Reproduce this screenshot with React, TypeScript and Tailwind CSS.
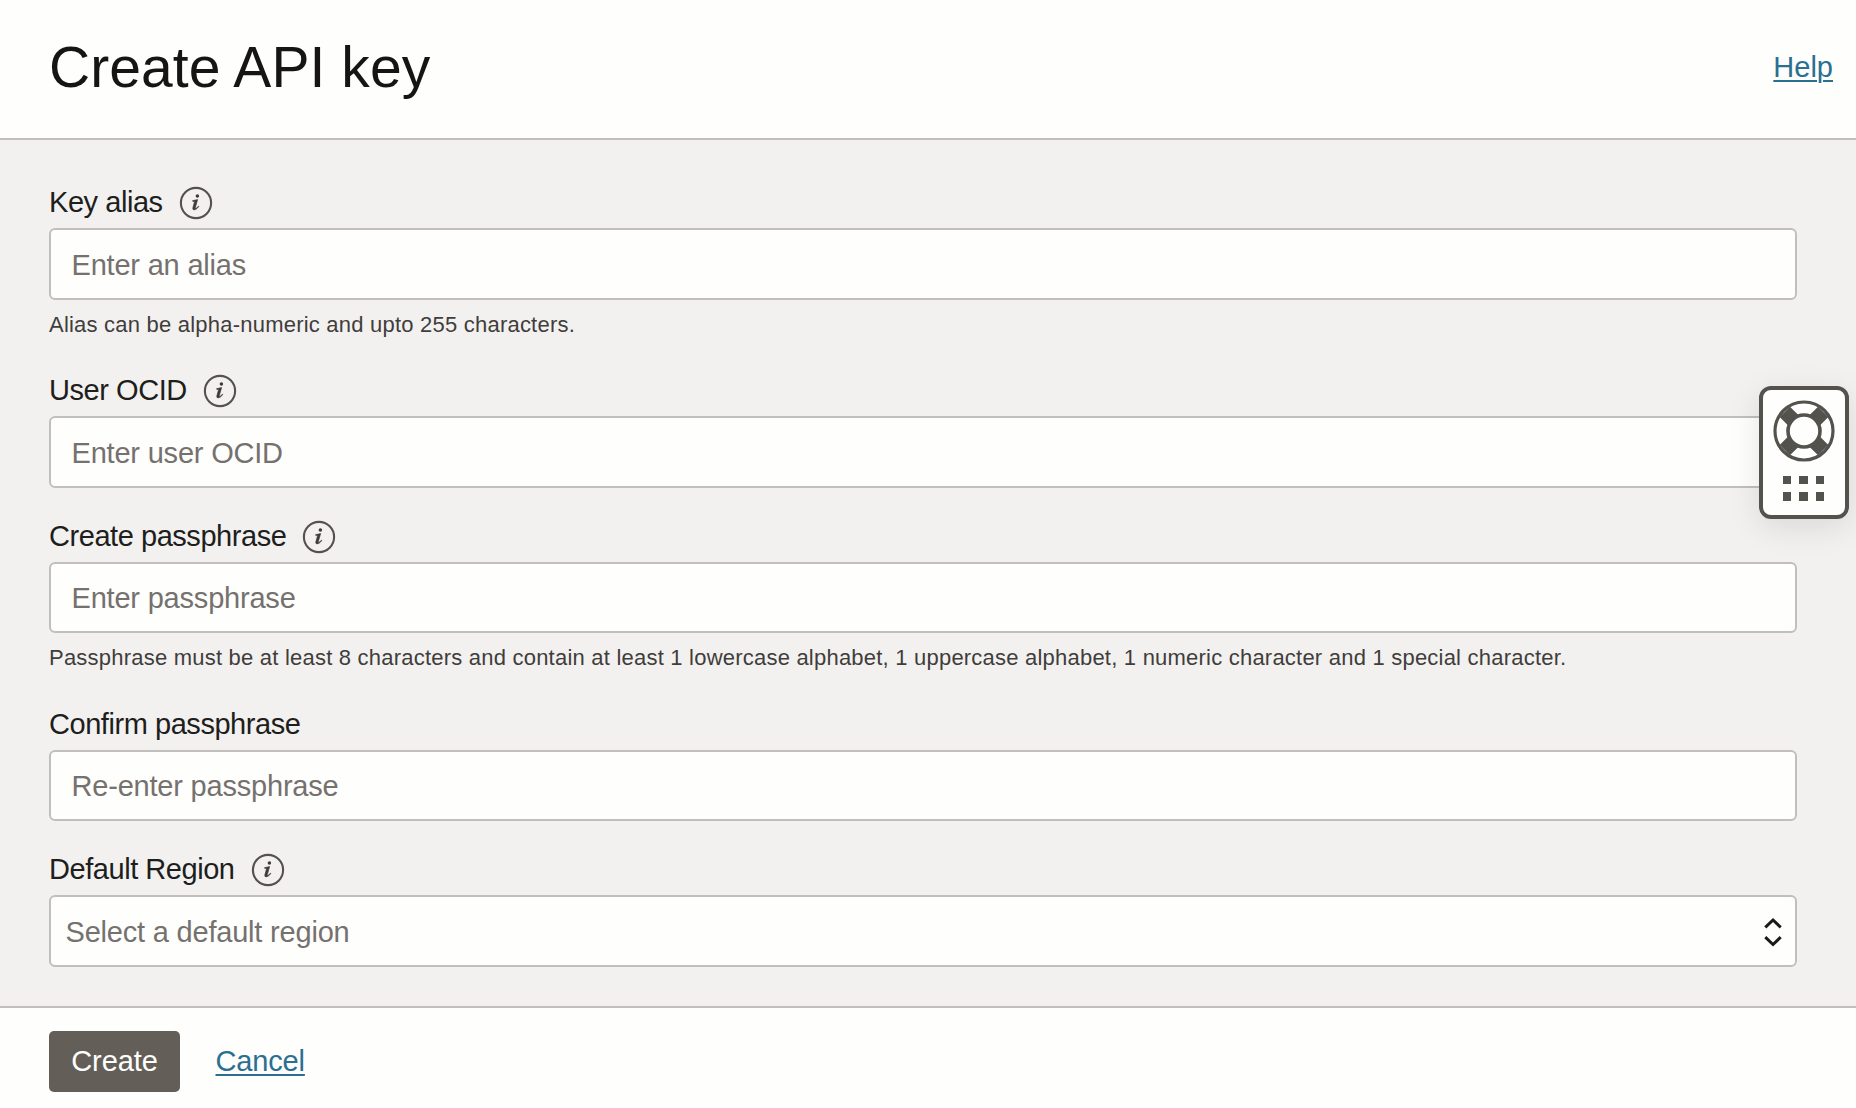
import type { ReactNode } from "react";

function InfoIcon() {
  return (
    <svg width="34" height="34" viewBox="0 0 34 34" className="shrink-0">
      <circle cx="17" cy="17" r="15.1" fill="none" stroke="#55524e" strokeWidth="2.1" />
      <path
        d="M13.6 14.7 L18.6 13.6 L16.3 21.6 Q16 23 17.2 22.2 L19.6 20.2 L19.9 20.6 Q17 24 15 23.9 Q13.3 23.7 13.9 21.7 L15.5 15.9 Q15.6 15.1 13.6 15.2 Z"
        fill="#3d3a37"
        stroke="#3d3a37"
        strokeWidth="0.7"
      />
      <circle cx="18.4" cy="10" r="1.75" fill="#3d3a37" />
    </svg>
  );
}

type FieldProps = {
  label: string;
  info?: boolean;
  helper?: string;
  children: ReactNode;
};

function Field({ label, info, helper, children }: FieldProps) {
  return (
    <div>
      <div className="flex h-[46px] items-start gap-4 text-[29px] leading-[40px] tracking-[-0.45px] text-[#201e1c]">
        <span>{label}</span>
        {info && (
          <span className="pt-1">
            <InfoIcon />
          </span>
        )}
      </div>
      {children}
      {helper && (
        <p className="h-[42.5px] pt-[9px] text-[22px] leading-[32px] tracking-[0.218px] whitespace-nowrap text-[#403d3b]">
          {helper}
        </p>
      )}
    </div>
  );
}

function TextInput({ placeholder }: { placeholder: string }) {
  return (
    <input
      placeholder={placeholder}
      className="block h-[71.5px] w-full rounded-[6px] border-2 border-[#c2beb9] bg-[#fefefd] px-[20.5px] pt-[3px] text-[29px] tracking-[-0.2px] text-[#201e1c] outline-none placeholder:text-[#75716e] placeholder:opacity-100"
    />
  );
}

function RegionSelect() {
  return (
    <button className="flex h-[71.5px] w-full items-center justify-between rounded-[6px] border-2 border-[#c2beb9] bg-[#fefefd] pt-[3px] pr-[13px] pl-[14.5px] text-[29px] tracking-[-0.2px] text-[#75716e]">
      <span>Select a default region</span>
      <svg width="18" height="32" viewBox="0 0 18 32" fill="none" stroke="#1c1a19" strokeWidth="3">
        <path d="M1.3 11.3 L9 4 L16.7 11.3 M1.3 21.2 L9 28.5 L16.7 21.2" />
      </svg>
    </button>
  );
}

function SupportWidget() {
  const dots = [0, 1, 2, 3, 4, 5];
  return (
    <div className="absolute top-[385.5px] right-[7.5px] flex h-[133px] w-[90px] flex-col items-center rounded-[12px] border-4 border-[#54524d] bg-[#fefefd] pt-[10px] shadow-[0_8px_32px_rgba(0,0,0,0.1)]">
      <svg width="62" height="62" viewBox="0 0 62 62" fill="none" stroke="#54524d">
        <path
          d="M20.5 20.5 L11.8 11.8 M41.5 20.5 L50.2 11.8 M20.5 41.5 L11.8 50.2 M41.5 41.5 L50.2 50.2"
          strokeWidth="14.5"
        />
        <circle cx="31" cy="31" r="29" strokeWidth="3.2" />
        <circle cx="31" cy="31" r="16" fill="#fefefd" strokeWidth="3.6" />
      </svg>
      <div className="mt-[14px] grid grid-cols-3 gap-[8px]">
        {dots.map((d) => (
          <span key={d} className="size-[8.5px] bg-[#54524d]" />
        ))}
      </div>
    </div>
  );
}

export default function App() {
  return (
    <div className="relative flex h-[1108px] w-[1856px] flex-col overflow-hidden bg-[#f3f1f0] font-['Liberation_Sans',Arial,sans-serif]">
      <header className="flex h-[140px] shrink-0 items-center justify-between border-b-2 border-[#c2beb9] bg-[#fefefd] pr-[23px] pb-[4px] pl-[49px]">
        <h1 className="text-[57px] leading-none tracking-[0.08px] text-[#161513]">Create API key</h1>
        <a className="pt-px text-[29px] text-[#2a7090] underline decoration-2 underline-offset-[3px]">Help</a>
      </header>
      <main className="flex flex-1 flex-col gap-[28px] pt-[42px] pr-[59px] pl-[49px]">
        <Field label="Key alias" info helper="Alias can be alpha-numeric and upto 255 characters.">
          <TextInput placeholder="Enter an alias" />
        </Field>
        <Field label="User OCID" info>
          <TextInput placeholder="Enter user OCID" />
        </Field>
        <Field
          label="Create passphrase"
          info
          helper="Passphrase must be at least 8 characters and contain at least 1 lowercase alphabet, 1 uppercase alphabet, 1 numeric character and 1 special character."
        >
          <TextInput placeholder="Enter passphrase" />
        </Field>
        <Field label="Confirm passphrase">
          <TextInput placeholder="Re-enter passphrase" />
        </Field>
        <Field label="Default Region" info>
          <RegionSelect />
        </Field>
      </main>
      <footer className="flex h-[102px] shrink-0 items-center gap-[35.5px] border-t-2 border-[#c2beb9] bg-[#fefefd] pt-[7px] pl-[49px]">
        <button className="h-[61px] w-[131px] rounded-[5px] bg-[#645e59] text-[29px] tracking-[-0.1px] text-[#fefefd]">
          Create
        </button>
        <a className="text-[29px] tracking-[-0.15px] text-[#2a7090] underline decoration-2 underline-offset-[3px]">Cancel</a>
      </footer>
      <SupportWidget />
    </div>
  );
}
